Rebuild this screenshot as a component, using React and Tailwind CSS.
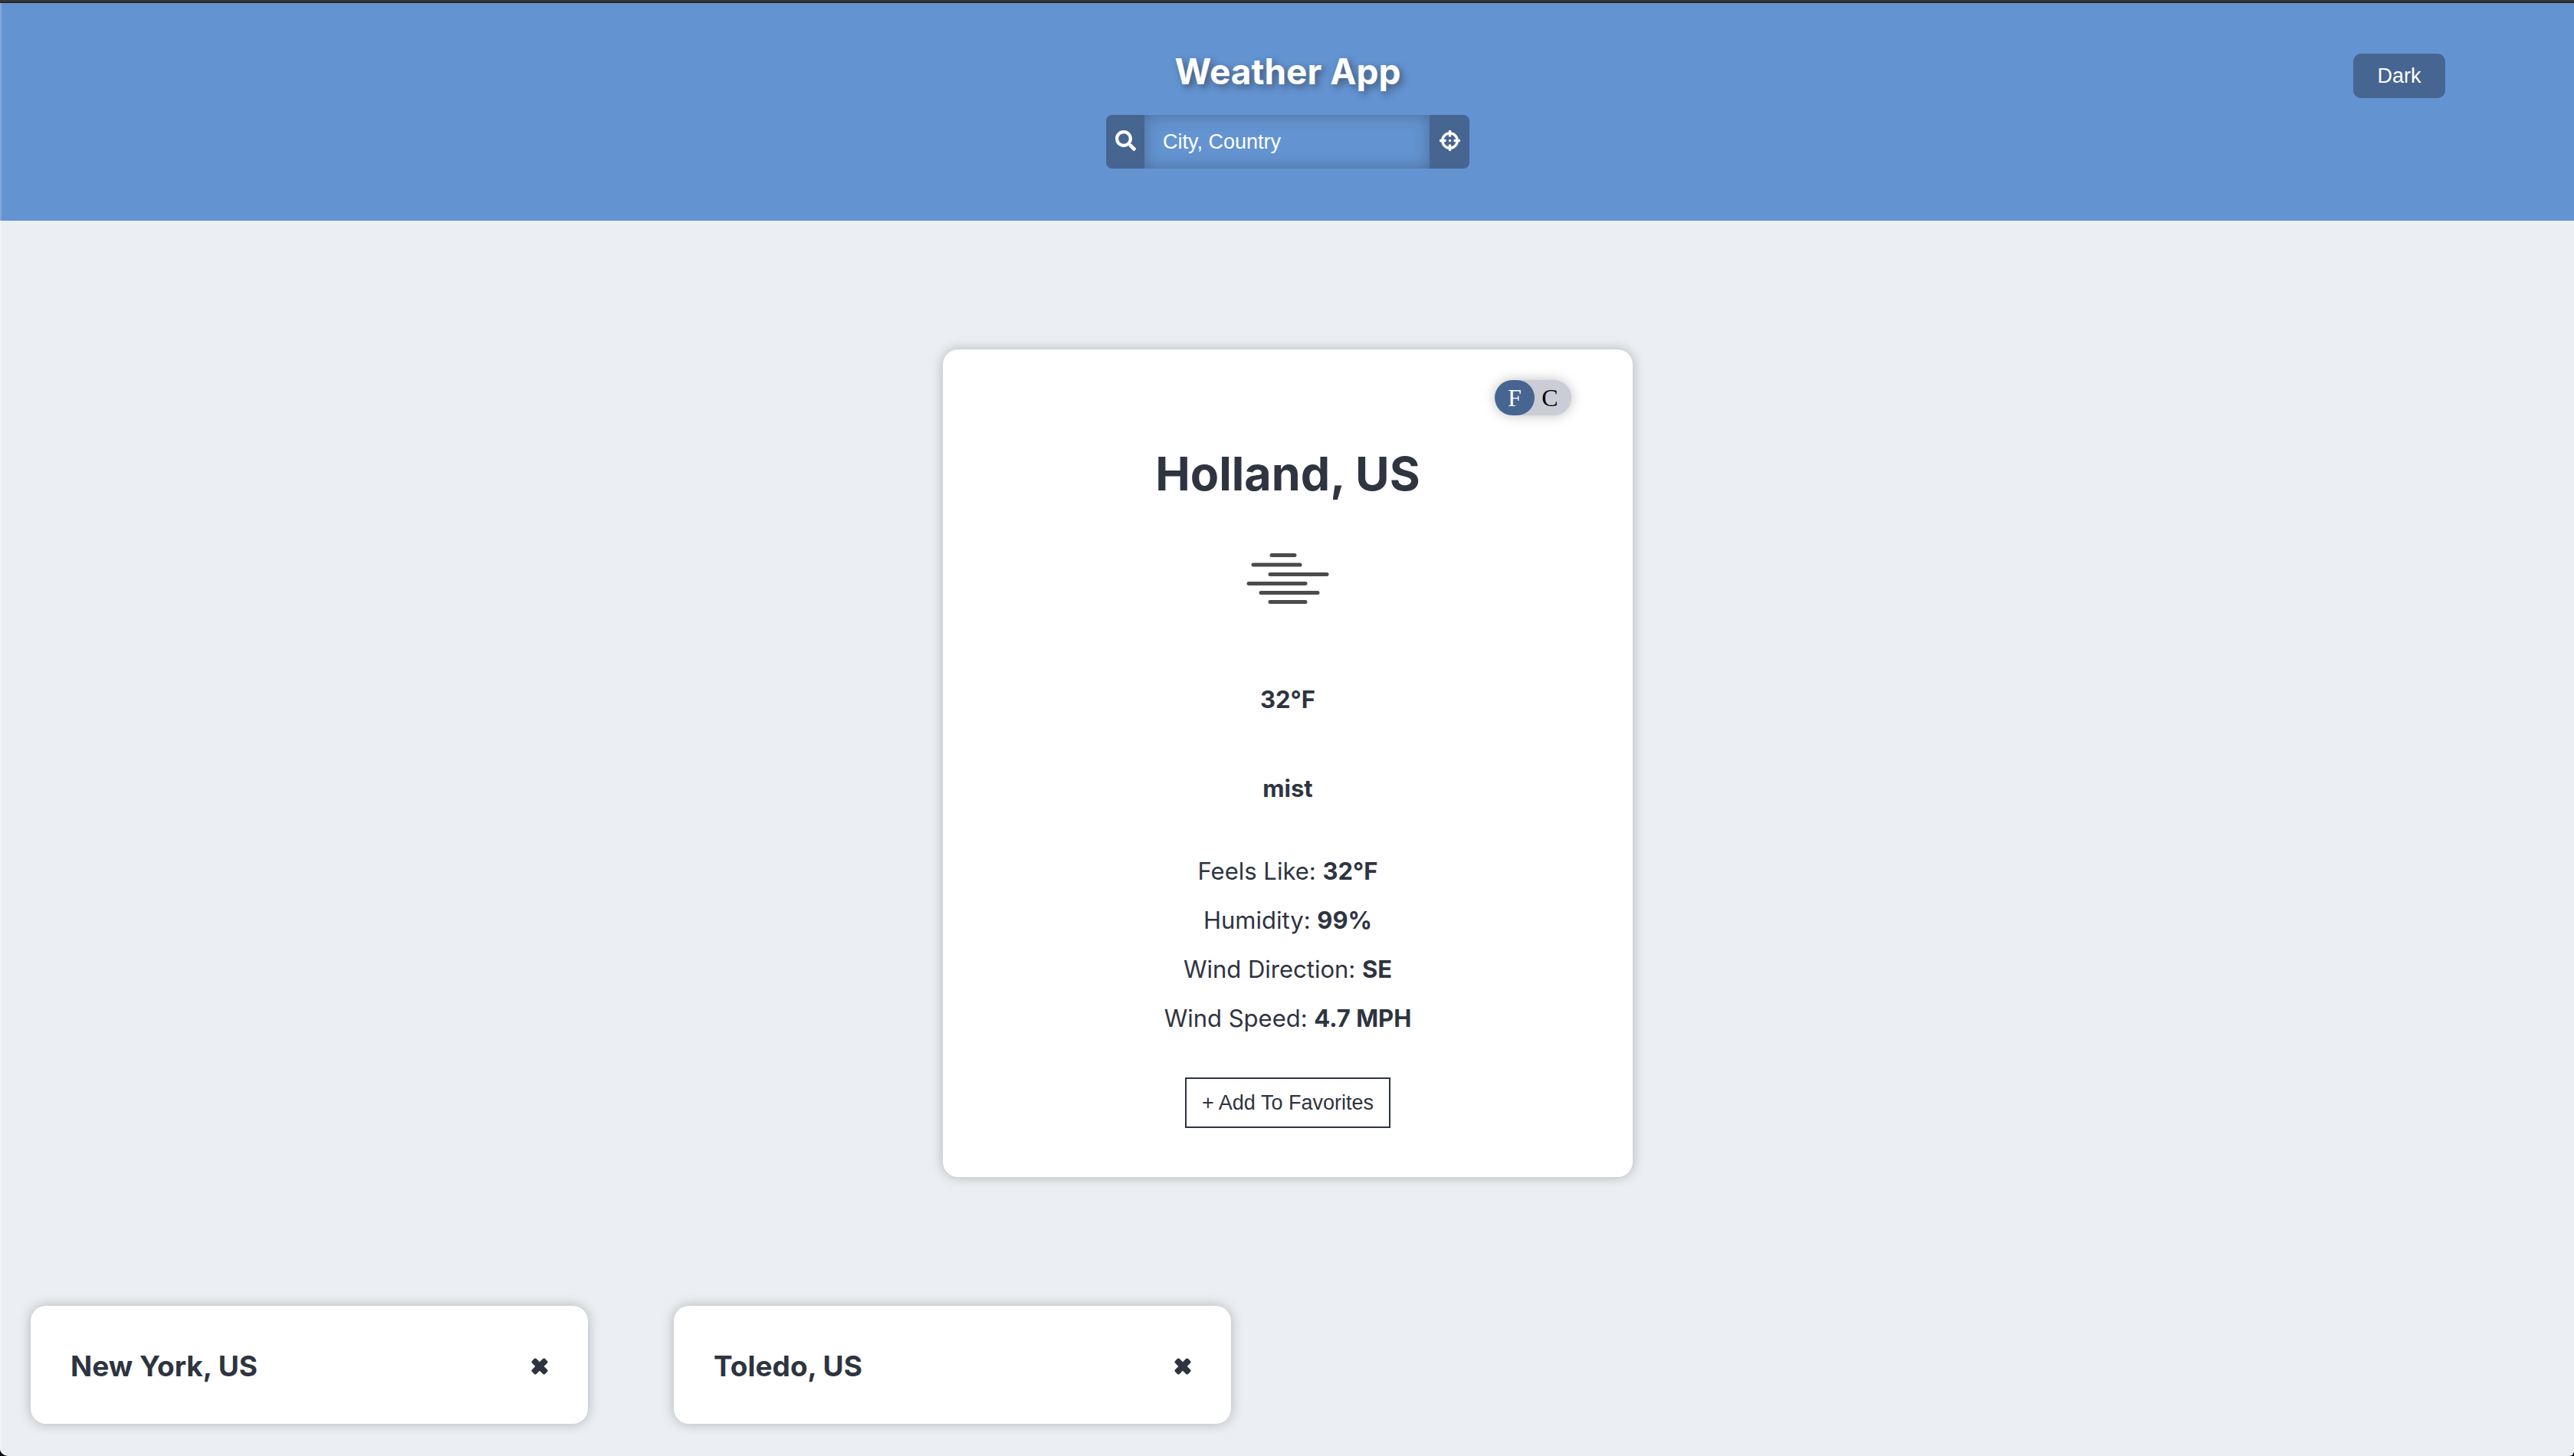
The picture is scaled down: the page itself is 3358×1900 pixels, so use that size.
import React from "react";
import { FaSearch, FaCrosshairs } from "react-icons/fa";

const details = [
  ["Feels Like:", "32°F"],
  ["Humidity:", "99%"],
  ["Wind Direction:", "SE"],
  ["Wind Speed:", "4.7 MPH"],
];

const favorites = ["New York, US", "Toledo, US"];

function MistIcon() {
  return (
    <svg
      role="img"
      aria-label="mist"
      className="mt-[66px] h-[72px] w-[112px]"
      viewBox="0 0 112 72"
      stroke="#4b4b4b"
      strokeWidth="5"
      strokeLinecap="round"
    >
      <path d="M35 4.5H65M11 17H72M33 29.5H107M5 41.5H79M21 53.5H95M33 65.5H79" />
    </svg>
  );
}

function CrossIcon() {
  return (
    <svg aria-hidden="true" className="size-[22px]" viewBox="-11 -11 22 22" fill="currentColor">
      <rect x="-12" y="-4" width="24" height="8" rx="2" transform="rotate(45)" />
      <rect x="-12" y="-4" width="24" height="8" rx="2" transform="rotate(-45)" />
    </svg>
  );
}

function Header() {
  return (
    <header className="grid grid-cols-[1fr_auto_1fr] items-start border-l-2 border-[#84a7d6] bg-[#6393d1] px-[5%] pb-[68px]">
      <div />
      <div className="flex flex-col items-center pt-[61px]">
        <h1 className="text-[46px] leading-[56px] font-bold text-white [text-shadow:4px_4px_10px_rgba(46,52,64,0.6)]">
          Weather App
        </h1>
        <form className="mt-[29px] flex h-[70px] overflow-hidden rounded-[8px] text-white">
          <button type="button" aria-label="Search" className="flex w-[50px] items-center justify-center bg-[#466591] pb-1">
            <FaSearch size={27} />
          </button>
          <input
            type="text"
            aria-label="City, Country"
            placeholder="City, Country"
            className="w-[372px] bg-transparent px-6 font-['Liberation_Sans',sans-serif] text-[27px] shadow-[inset_0_0_20px_rgba(46,52,64,0.4)] outline-none placeholder:text-white placeholder:opacity-100"
          />
          <button type="button" aria-label="Use my location" className="flex w-[52px] items-center justify-center bg-[#466591] pb-1">
            <FaCrosshairs size={27} />
          </button>
        </form>
      </div>
      <button
        type="button"
        className="mt-[66px] h-[58px] w-[120px] justify-self-end rounded-[10px] bg-[#466591] font-['Liberation_Sans',sans-serif] text-[27px] text-white"
      >
        Dark
      </button>
    </header>
  );
}

function UnitToggle() {
  return (
    <div className="mr-20 flex h-[46px] w-[100px] self-end rounded-full bg-[#cacdd5] font-['Liberation_Serif',serif] text-[32px] leading-[46px] shadow-[0_0_16px_rgba(0,0,0,0.25)]">
      <button type="button" aria-pressed="true" className="w-[52px] rounded-full bg-[#466591] text-white">
        F
      </button>
      <button type="button" aria-pressed="false" className="w-10 text-black">
        C
      </button>
    </div>
  );
}

function WeatherCard() {
  return (
    <section className="mx-auto mt-[168px] flex w-[900px] max-w-full flex-col items-center rounded-[20px] bg-white pt-10 pb-16 shadow-[0_0_16px_rgba(0,0,0,0.25)]">
      <UnitToggle />
      <h2 className="mt-10 text-[61px] leading-[72px] font-bold">Holland, US</h2>
      <MistIcon />
      <p className="mt-[101px] text-[31px] leading-10 font-bold">32°F</p>
      <p className="mt-[76px] text-[31px] leading-10 font-bold">mist</p>
      <ul className="mt-[56px] text-center text-[31px] leading-[64px]">
        {details.map(([label, value]) => (
          <li key={label}>
            {label} <strong className="font-bold">{value}</strong>
          </li>
        ))}
      </ul>
      <button
        type="button"
        className="mt-[45px] h-[66px] w-[268px] border-2 border-[#2e3440] font-['Liberation_Sans',sans-serif] text-[27px]"
      >
        + Add To Favorites
      </button>
    </section>
  );
}

export default function App() {
  return (
    <div className="min-h-screen bg-black">
      <div className="flex min-h-screen flex-col overflow-hidden rounded-br-[6px] rounded-bl-[10px] bg-[#ebeef3] font-[Inter,sans-serif] text-[#2e3440]">
        <div className="h-1 border-t-2 border-[#383838] bg-[#262626]" />
        <Header />
        <main className="flow-root grow border-l-2 border-[#f1f3f7] pb-[42px]">
          <WeatherCard />
          <ul className="mt-[168px] grid grid-cols-4">
            {favorites.map((city) => (
              <li key={city} className="pr-[74px] pl-[38px]">
                <div className="flex h-[154px] items-center justify-between rounded-[20px] bg-white px-[52px] pt-[3px] shadow-[0_0_16px_rgba(0,0,0,0.25)]">
                  <h3 className="text-[37px] leading-[48px] font-bold">{city}</h3>
                  <button type="button" aria-label={"Remove " + city}>
                    <CrossIcon />
                  </button>
                </div>
              </li>
            ))}
          </ul>
        </main>
      </div>
    </div>
  );
}
